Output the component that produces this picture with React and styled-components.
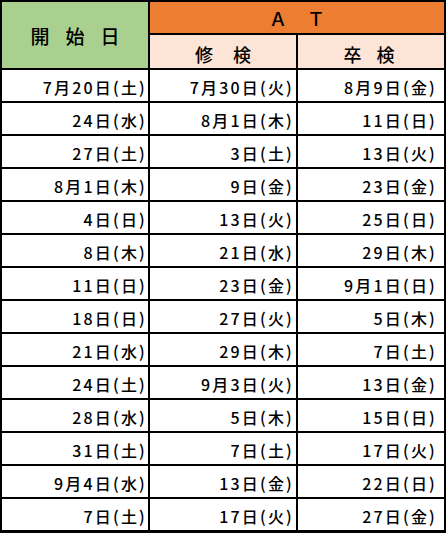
import React from 'react'
import styled, { createGlobalStyle } from 'styled-components'

const GlobalStyle = createGlobalStyle`
  html, body {
    margin: 0;
    padding: 0;
    background: #fff;
  }
  body {
    font-family: 'Noto Sans CJK JP', 'Noto Sans', sans-serif;
  }
`

const Grid = styled.div`
  width: 446px;
  box-sizing: border-box;
  display: grid;
  grid-template-columns: 146px 146px 146px;
  grid-template-rows: 31px 33px repeat(14, 31px);
  gap: 2px;
  padding: 2px 2px 3px 2px;
  background: #000;
  color: #000;
`

const HeadCell = styled.div`
  display: flex;
  align-items: center;
  justify-content: center;
  background: ${props => props.$bg};
  grid-row: ${props => props.$rows || 'auto'};
  grid-column: ${props => props.$cols || 'auto'};
  font-size: ${props => props.$size || 18}px;
  font-weight: 500;
  letter-spacing: ${props => props.$spread}px;
  padding-left: ${props => props.$spread}px;
  padding-right: ${props => props.$shift || 0}px;
  padding-top: ${props => props.$drop || 0}px;
  line-height: 1;
`

const Cell = styled.div`
  display: flex;
  align-items: center;
  justify-content: flex-end;
  background: #fff;
  font-size: 16px;
  font-weight: 500;
  letter-spacing: 2.2px;
  padding-right: ${props => props.$pad}px;
  padding-top: 2px;
  line-height: 1;
  white-space: nowrap;
`

const rows = [
  ['7月20日(土)', '7月30日(火)', '8月9日(金)'],
  ['24日(水)', '8月1日(木)', '11日(日)'],
  ['27日(土)', '3日(土)', '13日(火)'],
  ['8月1日(木)', '9日(金)', '23日(金)'],
  ['4日(日)', '13日(火)', '25日(日)'],
  ['8日(木)', '21日(水)', '29日(木)'],
  ['11日(日)', '23日(金)', '9月1日(日)'],
  ['18日(日)', '27日(火)', '5日(木)'],
  ['21日(水)', '29日(木)', '7日(土)'],
  ['24日(土)', '9月3日(火)', '13日(金)'],
  ['28日(水)', '5日(木)', '15日(日)'],
  ['31日(土)', '7日(土)', '17日(火)'],
  ['9月4日(水)', '13日(金)', '22日(日)'],
  ['7日(土)', '17日(火)', '27日(金)'],
]

const pads = [1, 2, 7]

const App = () => (
  <>
    <GlobalStyle />
    <Grid>
      <HeadCell $bg="#a9d08e" $rows="1 / 3" $spread={16} $size={19}>
        開始日
      </HeadCell>
      <HeadCell $bg="#ed7d31" $cols="2 / 4" $spread={20} $size={18}>
        ＡＴ
      </HeadCell>
      <HeadCell $bg="#fce4d6" $spread={20} $drop={4}>
        修検
      </HeadCell>
      <HeadCell $bg="#fce4d6" $spread={15} $shift={4} $drop={4}>
        卒検
      </HeadCell>
      {rows.map((row, i) =>
        row.map((text, j) => (
          <Cell key={`${i}-${j}`} $pad={pads[j]}>
            {text}
          </Cell>
        ))
      )}
    </Grid>
  </>
)

export default App
